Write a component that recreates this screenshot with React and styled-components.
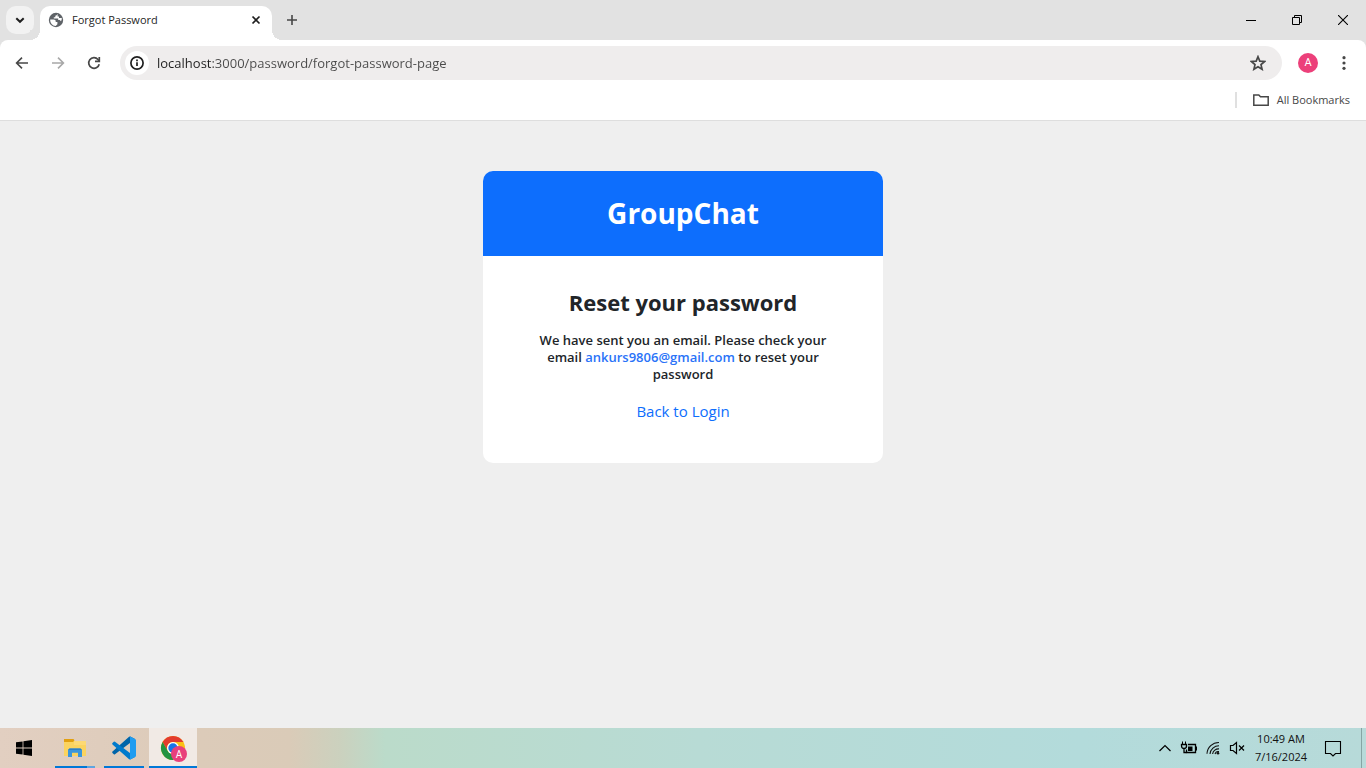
import React from "react";
import styled, { createGlobalStyle } from "styled-components";

const GlobalStyle = createGlobalStyle`
  *, *::before, *::after { box-sizing: border-box; }
  body {
    margin: 0;
    font-family: "Segoe UI", "Open Sans", "Noto Sans", sans-serif;
    color: #212529;
    background: #efefef;
  }
  button, input { font: inherit; color: inherit; }
  svg { display: block; flex: none; }
`;

const Screen = styled.div`
  min-height: 100vh;
  display: flex;
  flex-direction: column;
`;

const PlainButton = styled.button`
  display: flex;
  align-items: center;
  justify-content: center;
  padding: 0;
  border: 0;
  background: transparent;
`;

/* ---------- Browser chrome ---------- */

const TabStrip = styled.header`
  display: flex;
  align-items: flex-end;
  height: 40px;
  padding-left: 6px;
  background: #e2e2e2;
`;

const TabSearch = styled(PlainButton)`
  width: 28px;
  height: 28px;
  margin: 0 6px 6px 0;
  border-radius: 10px;
  background: #f2f2f2;
`;

const Tab = styled.div`
  position: relative;
  display: flex;
  align-items: center;
  width: 232px;
  height: 34px;
  padding: 0 8px 6px;
  gap: 8px;
  border-radius: 10px 10px 0 0;
  background: #fff;

  &::before, &::after {
    content: "";
    position: absolute;
    bottom: 0;
    width: 10px;
    height: 10px;
  }
  &::before {
    right: 100%;
    background: radial-gradient(circle at 0 0, #e2e2e2 10px, #fff 10px);
  }
  &::after {
    left: 100%;
    background: radial-gradient(circle at 100% 0, #e2e2e2 10px, #fff 10px);
  }
`;

const TabTitle = styled.span`
  flex: 1;
  font-size: 11px;
  line-height: 16px;
  color: #1f1f1f;
`;

const TabClose = styled(PlainButton)`
  width: 16px;
  height: 16px;
`;

const NewTab = styled(PlainButton)`
  width: 28px;
  height: 28px;
  margin: 0 0 6px 6px;
`;

const WindowControls = styled.div`
  display: flex;
  align-self: stretch;
  margin-left: auto;
`;

const WindowButton = styled(PlainButton)`
  width: 46px;
  height: 40px;
`;

const ToolbarBackdrop = styled.div`
  background: #e2e2e2;
`;

const Toolbar = styled.nav`
  display: flex;
  align-items: center;
  height: 46px;
  padding: 0 4px;
  border-radius: 8px 8px 0 0;
  background: #fff;
`;

const NavButton = styled(PlainButton)`
  width: 36px;
  height: 34px;
`;

const AddressBar = styled.label`
  flex: 1;
  display: flex;
  align-items: center;
  height: 34px;
  margin: 0 8px;
  padding: 0 16px 0 5px;
  gap: 8px;
  border-radius: 17px;
  background: #efeded;
`;

const SiteInfo = styled(PlainButton)`
  width: 24px;
  height: 24px;
  border-radius: 50%;
  background: #fff;
`;

const AddressInput = styled.input`
  flex: 1;
  min-width: 0;
  padding: 0;
  border: 0;
  outline: 0;
  font-size: 13px;
  line-height: 20px;
  color: transparent;
  background: linear-gradient(to right, #1f1f1f 54px, #4a4a4a 54px);
  background-clip: text;
`;

const Avatar = styled.span`
  display: flex;
  align-items: center;
  justify-content: center;
  width: 20px;
  height: 20px;
  border-radius: 50%;
  background: #ec407a;
  color: #fff;
  font-family: Roboto, sans-serif;
  font-size: 11px;
  line-height: 20px;
`;

const BookmarksBar = styled.div`
  display: flex;
  align-items: center;
  justify-content: flex-end;
  height: 35px;
  padding: 0 16px 7px;
  border-bottom: 1px solid #dedede;
  background: #fff;
`;

const Divider = styled.span`
  width: 2px;
  height: 16px;
  margin-right: 16px;
  background: #e0e0e0;
`;

const BookmarkFolder = styled(PlainButton)`
  gap: 8px;
  font-size: 11px;
  line-height: 16px;
  color: #474747;
`;

/* ---------- Page ---------- */

const Page = styled.main`
  flex: 1;
  padding: 50px 16px;
`;

const Card = styled.section`
  max-width: 400px;
  margin: 0 auto;
  overflow: hidden;
  border-radius: 10px;
  background: #fff;
  text-align: center;
`;

const CardHeader = styled.div`
  padding: 24px;
  background: #0d6efd;
  color: #fff;
`;

const Brand = styled.h1`
  margin: 0;
  font-size: 28px;
  font-weight: 700;
  line-height: 37px;
`;

const CardBody = styled.div`
  padding: 32px 48px 40px;
`;

const Heading = styled.h2`
  margin: 0 0 16px;
  font-size: 22px;
  font-weight: 700;
  line-height: 28px;
`;

const Message = styled.p`
  margin: 0 0 16px;
  font-size: 13px;
  font-weight: 600;
  line-height: 17px;
`;

const Email = styled.span`
  color: #2a73f8;
`;

const LoginLink = styled.a`
  display: inline-block;
  font-size: 15px;
  line-height: 24px;
  color: #0d6efd;
  text-decoration: none;
`;

/* ---------- Taskbar ---------- */

const Taskbar = styled.footer`
  display: flex;
  height: 40px;
  background: linear-gradient(
    to right,
    #e2cfc1 0,
    #dccbb9 200px,
    #dacbb8 290px,
    #cbd1be 340px,
    #bbdbca 385px,
    #b8dbd5 700px,
    #b3dbdb 1080px,
    #b7dad9 100%
  );
`;

const Apps = styled.div`
  display: flex;
  gap: 1px;
`;

const StartButton = styled(PlainButton)`
  width: 48px;
  margin-right: 2px;
`;

const AppButton = styled(PlainButton)`
  width: 48px;
  background: linear-gradient(to right, ${(p) => p.$line}) bottom / 100% 2px no-repeat
    ${(p) => (p.$active ? "#f1eae5" : "transparent")};
`;

const Tray = styled.div`
  display: flex;
  margin-left: auto;
`;

const TrayButton = styled(PlainButton)`
  width: ${(p) => p.$width || 24}px;
`;

const Clock = styled.time`
  display: flex;
  flex-direction: column;
  justify-content: center;
  width: 64px;
  font-size: 11px;
  line-height: 18px;
  text-align: center;
  color: #111;
`;

const ShowDesktop = styled(PlainButton)`
  width: 5px;
  margin-left: 8px;
  border-left: 1px solid #86a5a4;
`;

/* ---------- Icons ---------- */

const Globe = () => (
  <svg width="16" height="16" viewBox="0 0 16 16">
    <circle cx="8" cy="8" r="7.2" fill="#5f6368" />
    <path
      fill="#fff"
      d="M2.200 7.400h3.400c1.400 0 2.100.8 2.100 1.700v.8h1.700v2.400l-1.700 1.600C4.400 13.700 2 11 2.200 7.400zM9.200 2.200c-.2 1-.8 1.400-1.900 1.500v1.500H5.800v1.200h4.400v1.700h1.500l1.300 1.100c.6-.9.9-2 .8-3.200H11V4.500H9.600V2.300z"
    />
  </svg>
);

const Stroke = ({ w = 16, h = 16, d, color = "#1f1f1f", width = 1.6, ...rest }) => (
  <svg width={w} height={h} viewBox={`0 0 ${w} ${h}`} fill="none" stroke={color} strokeWidth={width} {...rest}>
    <path d={d} />
  </svg>
);

const Reload = () => (
  <svg width="16" height="16" viewBox="0 0 16 16" fill="none" stroke="#474747" strokeWidth="1.700">
    <path d="M13.200 9.200A5.300 5.300 0 1 1 12 4.500l1.300 1.400" />
    <path d="M13.300 2v4.300H9" />
  </svg>
);

const Info = () => (
  <svg width="16" height="16" viewBox="0 0 16 16" fill="none" stroke="#1f1f1f" strokeWidth="1.700">
    <circle cx="8" cy="8" r="6.100" />
    <path d="M8 7.200v3.900M8 4.600v1.600" />
  </svg>
);

const Star = () => (
  <svg width="16" height="16" viewBox="0 0 16 16" fill="none" stroke="#474747" strokeWidth="1.700">
    <path d="M8 1.700l1.800 4.400 4.800.4-3.600 3.100 1.100 4.700L8 11.800l-4.100 2.500L5 9.600 1.400 6.500l4.800-.4z" />
  </svg>
);

const Dots = () => (
  <svg width="16" height="16" viewBox="0 0 16 16" fill="#474747">
    <circle cx="8" cy="2.700" r="1.600" />
    <circle cx="8" cy="8" r="1.600" />
    <circle cx="8" cy="13.300" r="1.600" />
  </svg>
);

const Windows = () => (
  <svg width="16" height="16" viewBox="0 0 16 16" fill="#000">
    <path d="M0 2.300l6.600-.9v6.100H0zM7.400 1.300L16 0v7.500H7.400zM0 8.400h6.600v6.200L0 13.700zM7.400 8.400H16V16l-8.600-1.200z" />
  </svg>
);

const Explorer = () => (
  <svg width="22" height="20" viewBox="0 0 22 20">
    <path fill="#fbd35f" d="M0 3h22v15H0z" />
    <path fill="#ffe08a" d="M10 3h12v4H10z" opacity=".5" />
    <path fill="#e2a010" d="M0 1h9.500l1 1.200L9 4H0z" />
    <path fill="#3a96dd" d="M5.500 10.500h11L18 12v7h-4v-4.200H8V19H4v-7z" />
    <path fill="#2f7fc4" d="M5.500 10.500h11L18 12H4z" />
  </svg>
);

const VSCode = () => (
  <svg width="24" height="24" viewBox="0 0 24 24">
    <path fill="#0065a9" d="M23 3.100L18.200.6l-1.400.3L.5 15.600a1 1 0 0 0 0 1.400l1.300 1.200a.9.900 0 0 0 1.200 0L22.600 3.400z" />
    <path fill="#007acc" d="M23 20.900l-4.800 2.500-1.400-.3L.5 8.400a1 1 0 0 1 0-1.400l1.300-1.200a.9.900 0 0 1 1.200 0l19.600 14.800z" />
    <path fill="#1f9cf0" d="M18.200 23.400c-.6.200-1.100.1-1.500-.3.500.500 1.300.1 1.300-.5V1.400c0-.7-.8-1-1.300-.5.400-.4.900-.5 1.500-.3l4.900 2.400c.5.200.9.800.9 1.300v15.400c0 .6-.3 1.100-.9 1.400z" />
  </svg>
);

const ChromeLogo = () => (
  <svg width="28" height="28" viewBox="0 0 28 28">
    <circle cx="14" cy="14" r="12" fill="#fbc116" />
    <path fill="#e33b2e" d="M3.600 8A12 12 0 0 1 24.400 8H14a6 6 0 0 0-5.200 9z" />
    <path fill="#229342" d="M3.600 8a12 12 0 0 0 10.400 18l5.200-9A6 6 0 0 1 8.800 17z" />
    <circle cx="14" cy="14" r="6" fill="#fff" />
    <circle cx="14" cy="14" r="4.700" fill="#1a73e8" />
    <circle cx="20" cy="20" r="8" fill="#e8407b" />
    <text x="20" y="23.500" textAnchor="middle" fontFamily="Roboto, sans-serif" fontSize="10" fill="#fff">A</text>
  </svg>
);

const Battery = () => (
  <svg width="18" height="14" viewBox="0 0 18 14" fill="none" stroke="#000">
    <path strokeWidth="1.300" d="M8 3.500h7.500v8H6.500V8.500" />
    <path fill="#000" stroke="none" d="M8 5.500h4.500V10H8zM15.500 5.500H17v4h-1.500z" />
    <path d="M2.500.5v3M5.500.5v3" />
    <path strokeWidth="1.300" d="M1.500 3.500h5V5c0 1.500-1 2.500-2.500 2.500S1.500 6.500 1.500 5zM4 7.500v4h2.500" />
  </svg>
);

const Wifi = () => (
  <svg width="14" height="14" viewBox="0 0 14 14" fill="none" stroke="#111" strokeWidth="1.100">
    <path d="M1 12.800A11.800 11.800 0 0 1 13 1.500" />
    <path d="M4 13a9 9 0 0 1 9-8.200" />
    <path d="M6.600 13A6 6 0 0 1 13 7.900" />
    <path d="M9 13a3.500 3.500 0 0 1 4-2.400" />
    <circle cx="12" cy="12.200" r="1.300" fill="#111" stroke="none" />
  </svg>
);

const Muted = () => (
  <svg width="16" height="14" viewBox="0 0 16 14" fill="none" stroke="#000" strokeWidth="1.200">
    <path d="M1.500 4.500H4L7.500 1.500v11L4 9.500H1.500z" />
    <path d="M10 4.500l5 5M15 4.500l-5 5" />
  </svg>
);

export default function App() {
  return (
    <Screen>
      <GlobalStyle />
      <TabStrip>
        <TabSearch aria-label="Search tabs">
          <Stroke d="M4.300 6.200L8 9.800l3.700-3.600" width={2} />
        </TabSearch>
        <Tab>
          <Globe />
          <TabTitle>Forgot Password</TabTitle>
          <TabClose aria-label="Close tab">
            <Stroke d="M4.500 4.500l7 7M11.500 4.500l-7 7" width={1.7} />
          </TabClose>
        </Tab>
        <NewTab aria-label="New tab">
          <Stroke d="M8 3v10M3 8h10" color="#474747" />
        </NewTab>
        <WindowControls>
          <WindowButton aria-label="Minimize">
            <Stroke w={10} h={10} d="M0 5.500h10" color="#000" width={1} />
          </WindowButton>
          <WindowButton aria-label="Restore">
            <Stroke w={10} h={10} d="M.5 2.500h7v7h-7zM2.500 2.500v-2h7v7h-2" color="#000" width={1} />
          </WindowButton>
          <WindowButton aria-label="Close">
            <Stroke w={10} h={10} d="M0 0l10 10M10 0L0 10" color="#000" width={1.1} />
          </WindowButton>
        </WindowControls>
      </TabStrip>

      <ToolbarBackdrop>
        <Toolbar>
          <NavButton aria-label="Back">
            <Stroke d="M14 8H3M8 2.600L2.600 8 8 13.400" color="#474747" />
          </NavButton>
          <NavButton aria-label="Forward">
            <Stroke d="M2 8h11M8 2.600L13.400 8 8 13.400" color="#a8a8a8" />
          </NavButton>
          <NavButton aria-label="Reload">
            <Reload />
          </NavButton>
          <AddressBar>
            <SiteInfo aria-label="View site information">
              <Info />
            </SiteInfo>
            <AddressInput aria-label="Address" defaultValue="localhost:3000/password/forgot-password-page" />
            <Star />
          </AddressBar>
          <NavButton aria-label="Profile">
            <Avatar>A</Avatar>
          </NavButton>
          <NavButton aria-label="Menu">
            <Dots />
          </NavButton>
        </Toolbar>
      </ToolbarBackdrop>

      <BookmarksBar>
        <Divider />
        <BookmarkFolder>
          <Stroke d="M.8 12.300V3h5l1.700 1.800h7.700v8.400H.8z" color="#474747" width={1.5} />
          All Bookmarks
        </BookmarkFolder>
      </BookmarksBar>

      <Page>
        <Card>
          <CardHeader>
            <Brand>GroupChat</Brand>
          </CardHeader>
          <CardBody>
            <Heading>Reset your password</Heading>
            <Message>
              We have sent you an email. Please check your email <Email>ankurs9806@gmail.com</Email> to reset your
              password
            </Message>
            <LoginLink href="#login">Back to Login</LoginLink>
          </CardBody>
        </Card>
      </Page>

      <Taskbar>
        <Apps>
          <StartButton aria-label="Start">
            <Windows />
          </StartButton>
          <AppButton
            aria-label="File Explorer"
            $line="transparent 4px, #0078d7 4px, #0078d7 36px, #5ea5e0 36px, #5ea5e0 44px, transparent 44px"
          >
            <Explorer />
          </AppButton>
          <AppButton
            aria-label="Visual Studio Code"
            $line="transparent 4px, #0078d7 4px, #0078d7 44px, transparent 44px"
          >
            <VSCode />
          </AppButton>
          <AppButton aria-label="Google Chrome" $active $line="#0078d7, #0078d7">
            <ChromeLogo />
          </AppButton>
        </Apps>
        <Tray>
          <TrayButton aria-label="Show hidden icons">
            <Stroke w={14} h={10} d="M1.500 8L7 2.500 12.500 8" color="#000" width={1.2} />
          </TrayButton>
          <TrayButton aria-label="Battery">
            <Battery />
          </TrayButton>
          <TrayButton aria-label="Network">
            <Wifi />
          </TrayButton>
          <TrayButton aria-label="Volume">
            <Muted />
          </TrayButton>
          <Clock dateTime="2024-07-16T10:49">
            <span>10:49 AM</span>
            <span>7/16/2024</span>
          </Clock>
          <TrayButton aria-label="Notifications" $width={40}>
            <Stroke w={18} h={18} d="M1.500 2.500h15v12h-5L9 17l-2.500-2.500h-5z" color="#000" width={1.1} />
          </TrayButton>
          <ShowDesktop aria-label="Show desktop" />
        </Tray>
      </Taskbar>
    </Screen>
  );
}
